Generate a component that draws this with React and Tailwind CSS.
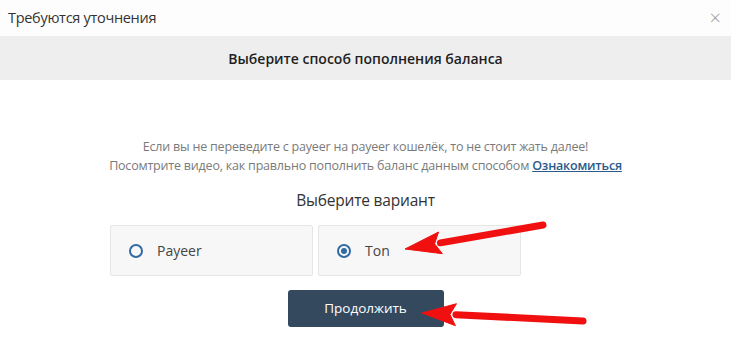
import React from "react";

const options = [
  { value: "payeer", label: "Payeer" },
  { value: "ton", label: "Ton" },
];

const Arrow = ({ tail, tip, base, half }) => {
  // shaft from tail to base, triangle head from base to tip
  const dx = tip[0] - tail[0];
  const dy = tip[1] - tail[1];
  const len = Math.hypot(dx, dy);
  const ux = dx / len;
  const uy = dy / len;
  const bx = tip[0] - ux * base;
  const by = tip[1] - uy * base;
  const px = -uy * half;
  const py = ux * half;
  return (
    <g fill="#f01010" stroke="#f01010">
      <line x1={tail[0]} y1={tail[1]} x2={bx} y2={by} strokeWidth="7" strokeLinecap="round" />
      <polygon
        points={`${tip[0]},${tip[1]} ${bx + px},${by + py} ${bx + ux * 6},${by + uy * 6} ${bx - px},${by - py}`}
        strokeWidth="1"
        strokeLinejoin="round"
      />
    </g>
  );
};

export default function App() {
  const [selected, setSelected] = React.useState("ton");

  return (
    <div className="relative w-[731px] h-[364px] bg-white overflow-hidden font-['Open_Sans',sans-serif]">
      <div className="h-[37px] flex items-center justify-between pl-[8px] pr-[10px] border-b border-[#ececec] bg-[#fdfdfd]">
        <span className="text-[14.5px] text-[#333] tracking-[-0.3px]">Требуются уточнения</span>
        <span className="text-[20px] leading-none text-[#9a9a9a] font-light">×</span>
      </div>
      <div className="h-[43px] bg-[#eeeeee] flex items-center justify-center">
        <span className="text-[14px] font-semibold text-[#1f1f1f]">Выберите способ пополнения баланса</span>
      </div>

      <div className="pt-[57px] text-center text-[12.5px] leading-[19px] tracking-[-0.2px] text-[#7a7a7a]">
        <p>Если вы не переведите с payeer на payeer кошелёк, то не стоит жать далее!</p>
        <p>
          Посомтрите видео, как правльно пополнить баланс данным способом{" "}
          <a href="#" className="text-[#2c5a8a] font-semibold underline">Ознакомиться</a>
        </p>
      </div>

      <h2 className="mt-[14px] text-center text-[15.5px] leading-[22px] tracking-[-0.2px] text-[#333]">Выберите вариант</h2>

      <div className="mt-[14px] pl-[110px] flex gap-[5px]">
        {options.map((o) => (
          <label
            key={o.value}
            className="w-[203px] h-[51px] flex items-center gap-[14px] pl-[18px] bg-[#f7f7f7] border border-[#e6e6e6] rounded-[2px] cursor-pointer"
          >
            <input
              type="radio"
              name="variant"
              value={o.value}
              checked={selected === o.value}
              onChange={(e) => setSelected(e.target.value)}
              className="sr-only"
            />
            <span className="w-[14px] h-[14px] rounded-full border-2 border-[#2f6aa3] flex items-center justify-center">
              {selected === o.value && <span className="w-[6px] h-[6px] rounded-full bg-[#2f6aa3]" />}
            </span>
            <span className="text-[14px] text-[#444]">{o.label}</span>
          </label>
        ))}
      </div>

      <div className="mt-[14px] flex justify-center">
        <button className="w-[156px] h-[37px] bg-[#34495e] rounded-[3px] text-white text-[13.5px] font-medium">
          Продолжить
        </button>
      </div>

      <svg className="absolute inset-0 pointer-events-none" width="731" height="364">
        <Arrow tail={[543, 225]} tip={[405, 249]} base={36} half={11} />
        <Arrow tail={[583, 321]} tip={[422, 313]} base={34} half={11} />
      </svg>
    </div>
  );
}
